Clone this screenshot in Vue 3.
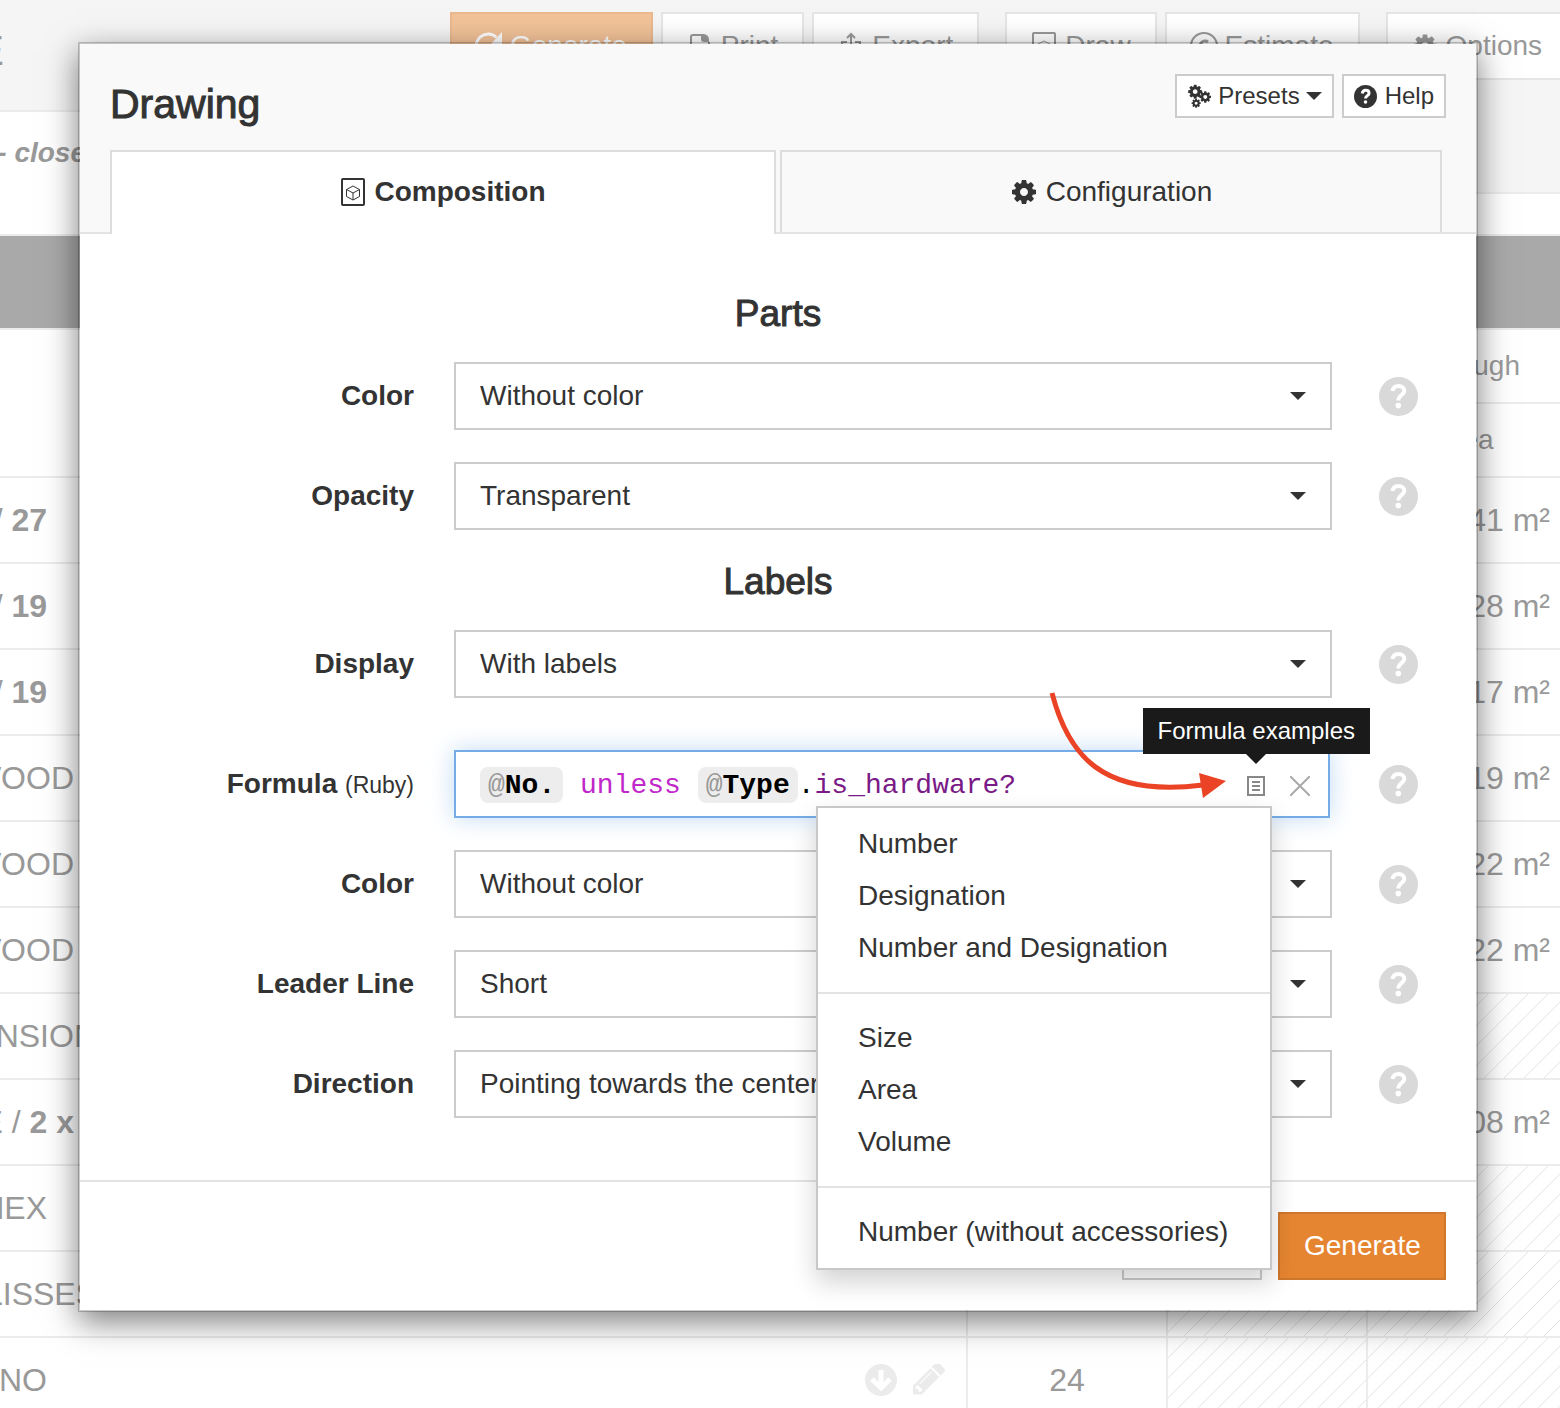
<script setup>
import { ref } from 'vue'

const cog = 'M1152 896q0-106-75-181t-181-75-181 75-75 181 75 181 181 75 181-75 75-181zm512-109v222q0 12-8 23t-20 13l-185 28q-19 54-39 91 35 50 107 138 10 12 10 25t-9 23q-27 37-99 108t-94 71q-12 0-26-9l-138-108q-44 23-91 38-16 136-29 186-7 28-36 28h-222q-14 0-24.5-8.5t-11.5-21.5l-28-184q-49-16-90-37l-141 107q-10 9-25 9-14 0-25-11-126-114-165-168-7-10-7-23 0-12 8-23 15-21 51-66.5t54-70.5q-27-50-41-99l-183-27q-13-2-21-12.5t-8-23.5v-222q0-12 8-23t19-13l186-28q14-46 39-92-40-57-107-138-10-12-10-24 0-10 9-23 26-36 98.5-107.5t94.5-71.5q13 0 26 10l138 107q44-23 91-38 16-136 29-186 7-28 36-28h222q14 0 24.5 8.5t11.5 21.5l28 184q49 16 90 37l142-107q9-9 24-9 13 0 25 10 129 119 165 170 7 8 7 22 0 12-8 23-15 21-51 66.5t-54 70.5q26 50 41 98l183 28q13 2 21 12.5t8 23.5z'
const pencil = 'M491 1536l91-91-235-235-91 91v107h128v128h107zm523-928q0-22-22-22-10 0-17 7l-542 542q-7 7-7 17 0 22 22 22 10 0 17-7l542-542q7-7 7-17zm-54-192l416 416-832 832h-416v-416zm683 96q0 53-37 90l-166 166-416-416 166-165q36-38 90-38 53 0 91 38l235 234q37 39 37 91z'

const rows = [
  { name: '/', bold: '27', size: 'short', area: '0.41 m²' },
  { name: '/', bold: '19', size: 'short', area: '0.28 m²' },
  { name: '/', bold: '19', size: 'short', area: '0.17 m²' },
  { name: 'WOOD', size: 'medium', area: '0.19 m²' },
  { name: 'WOOD', size: 'medium', area: '0.22 m²' },
  { name: 'WOOD', size: 'medium', area: '0.22 m²' },
  { name: 'NSION', size: 'long' },
  { name: 'E /', bold: '2 x', size: 'medium', area: '0.08 m²' },
  { name: 'MEX', size: 'short' },
  { name: 'LISSES', size: 'long' },
  { name: 'NO', size: 'short', count: 24, tools: true },
]

const sections = [
  {
    title: 'Parts',
    fields: [
      { id: 'part-color', label: 'Color', value: 'Without color' },
      { id: 'part-opacity', label: 'Opacity', value: 'Transparent' },
    ],
  },
  {
    title: 'Labels',
    fields: [
      { id: 'label-display', label: 'Display', value: 'With labels' },
      { id: 'label-formula', label: 'Formula', formula: true },
      { id: 'label-color', label: 'Color', value: 'Without color' },
      { id: 'label-leader', label: 'Leader Line', value: 'Short' },
      { id: 'label-direction', label: 'Direction', value: 'Pointing towards the center' },
    ],
  },
]

const examples = [
  ['Number', 'Designation', 'Number and Designation'],
  ['Size', 'Area', 'Volume'],
  ['Number (without accessories)'],
]

const tab = ref('composition')
</script>

<template>
  <div class="page">
    <div class="backdrop">
      <header class="top">
        <div class="top-left">
          <div class="doc-title"><span>E</span></div>
          <div class="doc-note"><em>- close</em></div>
        </div>
        <nav class="toolbar">
          <button type="button" class="tool primary">
            <svg viewBox="0 0 30 30"><path d="M25.500 19A12 12 0 1 1 22.500 6.500" fill="none" stroke="currentColor" stroke-width="3" /><path d="M28 1v12H17z" fill="currentColor" /></svg>
            Generate
          </button>
          <button type="button" class="tool">
            <svg viewBox="0 0 30 30"><path d="M16 4H8Q6 4 6 6v20h18V11" fill="none" stroke="currentColor" stroke-width="2" /><path d="M16 3h3q5 1 5 6v2h-5q-3 0-3-3z" fill="currentColor" /></svg>
            Print
          </button>
          <button type="button" class="tool group-end">
            <svg viewBox="0 0 30 30" fill="none" stroke="currentColor" stroke-width="2"><path d="M11 11H6v14h18V11h-5M15 20V3M11 7l4-4 4 4" /></svg>
            Export
          </button>
          <button type="button" class="tool">
            <svg viewBox="0 0 30 30" fill="none" stroke="currentColor"><rect x="4" y="2" width="22" height="26" rx="1" stroke-width="2" /><path d="M15 10l6 3v7l-6 3-6-3v-7zM9 13l6 3 6-3M15 16v7" /></svg>
            Draw
          </button>
          <button type="button" class="tool group-end">
            <svg viewBox="0 0 30 30" fill="none" stroke="currentColor"><circle cx="15" cy="15" r="13" stroke-width="2" /><path d="M19 11a5 5 0 1 0 0 8" stroke-width="3" /></svg>
            Estimate
          </button>
          <button type="button" class="tool">
            <svg viewBox="-100 -100 1992 1992"><path :d="cog" fill="currentColor" /></svg>
            Options
          </button>
        </nav>
      </header>
      <div class="band"></div>
      <table class="parts">
        <colgroup><col /><col class="col-count" /><col class="col-count" /><col class="col-area" /></colgroup>
        <thead>
          <tr><th rowspan="2"></th><th rowspan="2"></th><th></th><th class="rough">Rough</th></tr>
          <tr><th></th><th>Area</th></tr>
        </thead>
        <tbody>
          <tr v-for="(row, i) in rows" :key="i">
            <td>
              <div class="name-cell">
                <span class="name" :class="row.size"><span>{{ row.name }} <b v-if="row.bold">{{ row.bold }}</b></span></span>
                <span v-if="row.tools" class="row-tools">
                  <svg width="32" height="32" viewBox="0 0 32 32"><circle cx="16" cy="16" r="16" fill="currentColor" /><path d="M16 6v17M7 15l9 9 9-9" fill="none" stroke="#fff" stroke-width="5" /></svg>
                  <svg width="32" height="32" viewBox="128 220 1520 1520"><path :d="pencil" fill="currentColor" /></svg>
                </span>
              </div>
            </td>
            <td class="count">{{ row.count }}</td>
            <td :class="{ hatch: !row.area }"></td>
            <td class="area" :class="{ hatch: !row.area }">{{ row.area }}</td>
          </tr>
        </tbody>
      </table>
    </div>

    <div class="overlay">
      <section class="modal" role="dialog" aria-labelledby="dialog-title">
        <header class="modal-head">
          <div class="title-row">
            <h1 id="dialog-title">Drawing</h1>
            <div class="head-buttons">
              <button type="button">
                <svg width="25" height="26" viewBox="0 0 26 26" fill="currentColor">
                  <svg x="0" y="0" width="17" height="17" viewBox="0 0 1792 1792"><path :d="cog" /></svg>
                  <svg x="12" y="7" width="14" height="14" viewBox="0 0 1792 1792"><path :d="cog" /></svg>
                  <svg x="4" y="15" width="11" height="11" viewBox="0 0 1792 1792"><path :d="cog" /></svg>
                </svg>
                <span>Presets</span>
                <svg class="mini-caret" width="16" height="8" viewBox="0 0 16 8"><path d="M0 0h16L8 8z" fill="currentColor" /></svg>
              </button>
              <button type="button">
                <svg class="help-mark" width="23" height="23" viewBox="0 0 39 39"><circle cx="19.500" cy="19.500" r="19.500" fill="currentColor" /><path d="M14 14.500C14.500 10.500 17 9 20 9c3.500 0 5.500 2.300 5.500 4.800 0 4.200-6 4.400-6 9.200" fill="none" stroke="#fff" stroke-width="5" /><circle cx="19.500" cy="29" r="3" fill="#fff" /></svg>
                <span>Help</span>
              </button>
            </div>
          </div>
          <div class="tabs" role="tablist">
            <button type="button" role="tab" class="tab first" :class="{ active: tab === 'composition' }" @click="tab = 'composition'">
              <svg width="26" height="30" viewBox="0 0 26 30" fill="none" stroke="currentColor"><rect x="2" y="2" width="22" height="26" rx="1" stroke-width="2" /><path d="M13 9l6.500 3.500v7L13 23l-6.500-3.500v-7zM6.500 12.500L13 16l6.500-3.500M13 16v7" /></svg>
              Composition
            </button>
            <button type="button" role="tab" class="tab" :class="{ active: tab === 'configuration' }" @click="tab = 'configuration'">
              <svg width="28" height="28" viewBox="0 0 1792 1792"><path :d="cog" fill="currentColor" /></svg>
              Configuration
            </button>
          </div>
        </header>

        <form class="modal-body" @submit.prevent>
          <template v-for="section in sections" :key="section.title">
            <h2>{{ section.title }}</h2>
            <div class="fields">
              <div v-for="field in section.fields" :key="field.id" class="field" :class="{ 'formula-row': field.formula }">
                <label :id="field.id + '-label'" :for="field.id">{{ field.label }} <small v-if="field.formula">(Ruby)</small></label>
                <div v-if="field.formula" class="formula">
                  <div :id="field.id" class="editor" contenteditable="true" spellcheck="false" role="textbox" :aria-labelledby="field.id + '-label'"><span class="chip"><i>@</i>No.</span> <span class="keyword">unless</span> <span class="chip"><i>@</i>Type</span>.<span class="method">is_hardware?</span></div>
                  <button type="button" class="icon-button" aria-label="Formula examples">
                    <svg width="18" height="20" viewBox="0 0 18 20" fill="none" stroke="#888" stroke-width="2"><path d="M1 1h16v18H1zM5 6h8M5 10h8M5 14h8" /></svg>
                  </button>
                  <button type="button" class="icon-button" aria-label="Clear">
                    <svg width="20" height="20" viewBox="0 0 20 20" fill="none" stroke="#aaa" stroke-width="2"><path d="M0 0l20 20M20 0L0 20" /></svg>
                  </button>
                  <div class="examples" role="menu">
                    <ul v-for="(group, g) in examples" :key="g">
                      <li v-for="item in group" :key="item"><a href="#" role="menuitem">{{ item }}</a></li>
                    </ul>
                  </div>
                  <div class="tooltip" role="tooltip">Formula examples</div>
                  <svg class="pointer" width="190" height="112" viewBox="1040 690 190 112"><path d="M1052 693C1068 755 1102 798 1203 785" fill="none" stroke="#ea4326" stroke-width="5" /><path d="M1199 773l27 8-23 17z" fill="#ea4326" /></svg>
                </div>
                <div v-else class="select">
                  <select :id="field.id"><option>{{ field.value }}</option></select>
                  <svg width="16" height="8" viewBox="0 0 16 8"><path d="M0 0h16L8 8z" fill="#333" /></svg>
                </div>
                <button type="button" class="help" :aria-label="'Help: ' + field.label">
                  <svg width="39" height="39" viewBox="0 0 39 39"><circle cx="19.500" cy="19.500" r="19.500" fill="#d9d9d9" /><path d="M13.500 14C14 10.500 16.500 9 19.500 9c3.700 0 5.800 2.100 5.800 4.800 0 4.200-6 4.400-6 9.700" fill="none" stroke="#fff" stroke-width="4" /><circle cx="19.300" cy="28.600" r="2.800" fill="#fff" /></svg>
                </button>
              </div>
            </div>
          </template>
        </form>

        <footer class="modal-foot">
          <button type="button" class="cancel" aria-label="Close"></button>
          <button type="button" class="submit">Generate</button>
        </footer>
      </section>
    </div>
  </div>
</template>

<style>
body {
  margin: 0;
  background: #fff;
}
</style>

<style scoped>
* {
  box-sizing: border-box;
}
.page {
  position: relative;
  height: 100vh;
  overflow: hidden;
  font-family: "Liberation Sans", Arial, sans-serif;
  font-size: 28px;
  line-height: 40px;
  color: #333;
}
button,
select {
  font: inherit;
  color: inherit;
  margin: 0;
}
svg {
  display: block;
  flex: none;
}

/* Page behind the dialog */
.backdrop {
  color: #999;
}
.top {
  display: flex;
  padding-bottom: 40px;
  border-bottom: 2px solid #ececec;
}
.top-left {
  width: 300px;
  flex: none;
}
.doc-title {
  height: 112px;
  padding-top: 31px;
  background: #f5f5f5;
  border-bottom: 2px solid #ececec;
  font-size: 42px;
}
.doc-title span {
  display: flex;
  justify-content: flex-end;
  width: 4px;
}
.doc-note {
  display: flex;
  justify-content: flex-end;
  width: 86px;
  padding-top: 21px;
  font-weight: bold;
  white-space: nowrap;
}
.toolbar {
  flex: 1;
  min-width: 0;
  display: flex;
  gap: 8px;
  align-items: flex-start;
  height: 194px;
  padding: 12px 0 0 150px;
  background: #f5f5f5;
  border-bottom: 2px solid #ececec;
}
.tool {
  display: flex;
  align-items: center;
  gap: 6px;
  flex: none;
  height: 68px;
  padding: 0 24px 0 22px;
  background: #fff;
  border: 2px solid #e5e5e5;
}
.tool svg {
  width: 30px;
  height: 30px;
}
.tool.primary {
  background: #f2c298;
  border-color: #ebb98d;
  color: #fff;
}
.group-end {
  margin-right: 18px;
}
.band {
  height: 94px;
  background: #a9a9a9;
  border-bottom: 2px solid #ececec;
}
.parts {
  width: 100%;
  table-layout: fixed;
  border-collapse: separate;
  border-spacing: 0;
}
.col-count {
  width: 200px;
}
.col-area {
  width: 192px;
}
.parts th {
  height: 74px;
  padding: 0;
  font-weight: normal;
  border-bottom: 2px solid #ececec;
}
.parts th.rough {
  text-align: right;
  padding-right: 40px;
}
.parts td {
  height: 86px;
  padding: 0;
  border-right: 2px solid #ececec;
  border-bottom: 2px solid #ececec;
  font-size: 32px;
}
.parts td:last-child {
  border-right: 0;
}
.parts td.count {
  text-align: center;
}
.parts td.area {
  text-align: right;
  padding-right: 10px;
}
.parts td.hatch {
  background: linear-gradient(to bottom right, transparent 48%, #e5e5e5 49%, #e5e5e5 51%, transparent 52%) 0 0 / 20px 20px;
}
.name-cell {
  display: flex;
  align-items: center;
}
.name {
  display: flex;
  justify-content: flex-end;
  white-space: nowrap;
}
.name.short {
  width: 47px;
}
.name.medium {
  width: 74px;
}
.name.long {
  width: 97px;
}
.row-tools {
  display: flex;
  gap: 16px;
  margin-left: auto;
  padding-right: 21px;
  color: #ebebeb;
}

/* Dialog */
.overlay {
  position: absolute;
  inset: 0;
  padding: 42px 82px 42px 78px;
}
.modal {
  background: #fff;
  background-clip: padding-box;
  border: 2px solid rgba(0, 0, 0, 0.2);
  box-shadow: 0 10px 30px rgba(0, 0, 0, 0.5);
}
.modal-head {
  padding: 30px 34px 0 30px;
  background: #f9f9f9;
  background-clip: padding-box;
  border-bottom: 2px solid #e3e3e3;
}
.title-row {
  display: flex;
  justify-content: space-between;
  align-items: flex-start;
  height: 76px;
  margin-right: -4px;
}
h1,
h2 {
  margin: 0;
  font-weight: normal;
  -webkit-text-stroke: 1px currentColor;
}
h1 {
  font-size: 41px;
  line-height: 60px;
}
h2 {
  font-size: 37px;
  line-height: 40px;
  text-align: center;
}
.head-buttons {
  display: flex;
  gap: 8px;
}
.head-buttons button {
  display: flex;
  align-items: center;
  gap: 6px;
  height: 44px;
  padding: 0 10px;
  background: #fff;
  border: 2px solid #ccc;
  font-size: 24px;
}
.head-buttons .help-mark {
  margin-right: 2px;
}
.tabs {
  display: flex;
  gap: 4px;
}
.tab {
  flex: 331;
  display: flex;
  align-items: center;
  justify-content: center;
  gap: 8px;
  height: 82px;
  padding: 0;
  background: transparent;
  border: 2px solid #ddd;
  border-bottom: 0;
}
.tab.first {
  flex: 333;
}
.tab.active {
  height: 84px;
  margin-bottom: -2px;
  padding-bottom: 2px;
  background: #fff;
  font-weight: bold;
}
.modal-body {
  padding: 60px 0 62px;
}
.fields {
  display: flex;
  flex-direction: column;
  gap: 32px;
  padding-top: 28px;
}
.fields + h2 {
  margin-top: 32px;
}
.field {
  display: flex;
  align-items: center;
}
.formula-row {
  margin-top: 20px;
}
.field label {
  width: 334px;
  flex: none;
  margin-right: 40px;
  text-align: right;
  font-weight: bold;
}
.field small {
  font-size: 23px;
  font-weight: normal;
}
.select,
.formula {
  position: relative;
  flex: 1;
  min-width: 0;
  height: 68px;
}
.select select {
  width: 100%;
  height: 68px;
  padding: 0 60px 0 24px;
  appearance: none;
  background: #fff;
  border: 2px solid #ccc;
  border-radius: 0;
}
.select svg {
  position: absolute;
  top: 30px;
  right: 26px;
  pointer-events: none;
}
.help {
  margin: 0 58px 0 47px;
  padding: 0;
  border: 0;
  background: none;
}
.formula {
  display: flex;
  align-items: center;
  gap: 25px;
  margin-right: 2px;
  padding: 4px 18px 0 24px;
  background: #fff;
  border: 2px solid #75abe6;
  box-shadow: 0 0 24px rgba(102, 165, 233, 0.4);
}
.editor {
  flex: 1;
  min-width: 0;
  white-space: pre;
  outline: 0;
  font-family: "Liberation Mono", "Courier New", monospace;
  color: #000;
}
.chip {
  display: inline-block;
  height: 36px;
  line-height: 38px;
  padding: 0 8px;
  background: #ededed;
  border-radius: 8px;
  font-weight: bold;
}
.chip i {
  font-style: normal;
  font-weight: normal;
  color: #999;
}
.keyword {
  color: #c028c9;
}
.method {
  color: #7a1a87;
}
.icon-button {
  padding: 0;
  border: 0;
  background: none;
}
.examples {
  position: absolute;
  z-index: 2;
  top: 54px;
  right: 56px;
  min-width: 456px;
  background: #fff;
  background-clip: padding-box;
  border: 2px solid #c8c8c8;
  box-shadow: 0 12px 24px rgba(0, 0, 0, 0.18);
  padding: 10px 0;
}
.examples ul {
  margin: 0;
  padding: 0;
  list-style: none;
}
.examples ul + ul {
  margin-top: 18px;
  padding-top: 18px;
  border-top: 2px solid #e3e3e3;
}
.examples a {
  display: block;
  padding: 0 40px;
  line-height: 52px;
  white-space: nowrap;
  color: #333;
  text-decoration: none;
}
.tooltip {
  position: absolute;
  z-index: 3;
  top: -44px;
  right: -42px;
  padding: 0 15px;
  background: #1a1a1a;
  color: #fff;
  font-size: 24px;
  line-height: 46px;
  white-space: nowrap;
}
.tooltip::after {
  content: "";
  position: absolute;
  top: 100%;
  left: 50%;
  margin-left: -10px;
  border: 10px solid transparent;
  border-top-color: #1a1a1a;
  border-bottom: 0;
}
.pointer {
  position: absolute;
  z-index: 3;
  top: -62px;
  right: 98px;
}
.modal-foot {
  display: flex;
  justify-content: flex-end;
  gap: 16px;
  padding: 30px;
  border-top: 2px solid #e3e3e3;
}
.modal-foot button {
  height: 68px;
  padding: 0 24px;
  background: #fff;
  border: 2px solid #ccc;
}
.modal-foot .cancel {
  width: 140px;
}
.modal-foot .submit {
  width: 168px;
  background: #e68531;
  border-color: #cf772c;
  color: #fff;
}
</style>
